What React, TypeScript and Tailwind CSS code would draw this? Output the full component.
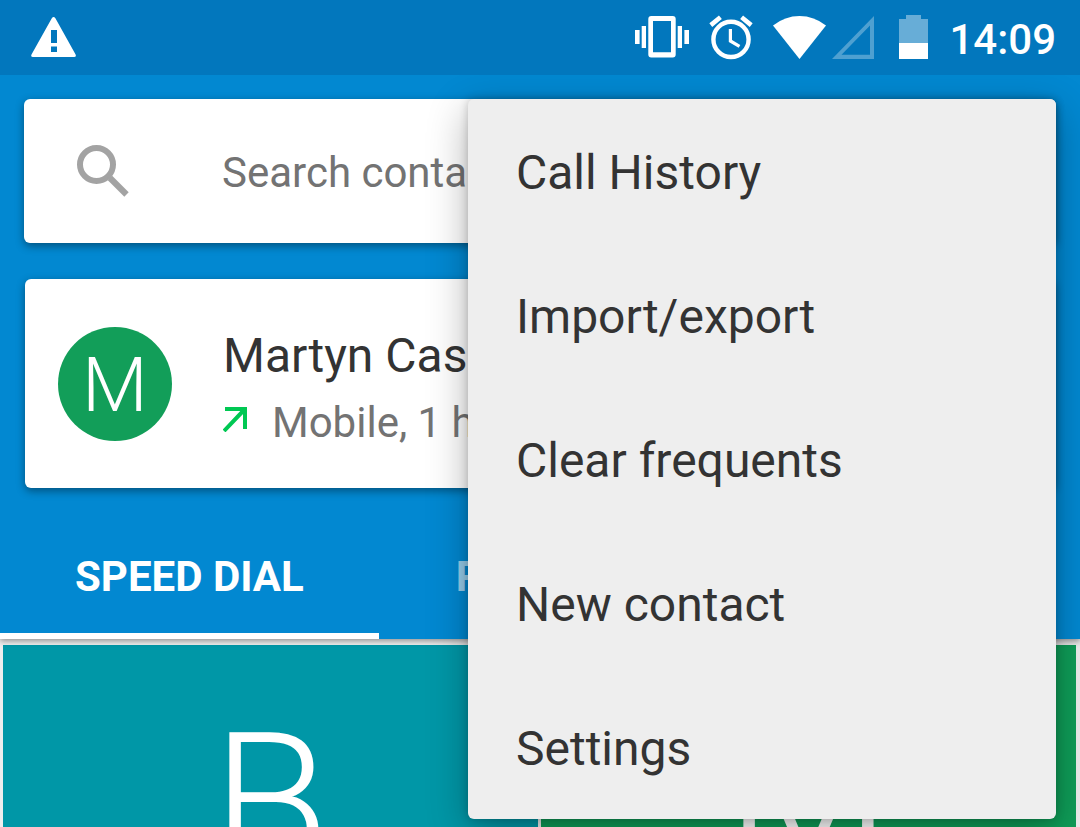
import { useState } from "react";
import clsx from "clsx";

const MENU_ITEMS = ["Call History", "Import/export", "Clear frequents", "New contact", "Settings"];
const TABS = ["SPEED DIAL", "RECENTS", "CONTACTS"];
const TILES = [
  { letter: "B", color: "bg-[#0097a7]" },
  { letter: "M", color: "bg-[#0f9d58]" },
];

function StatusBar() {
  return (
    <header className="relative z-20 flex h-[75px] items-center bg-[#0277bd] pr-6 pl-[31px] text-white">
      <svg width="45" height="45" viewBox="0 0 45 45" aria-label="Warning">
        <path
          fill="currentColor"
          fillRule="evenodd"
          d="M20.8 3.2Q22.6 .8 24.4 3.2L44.6 39.4Q45.6 42 43 42H2Q-.6 42 .5 39.4ZM20 15V28H26V15ZM20 31.500V37H26V31.500Z"
        />
      </svg>

      <div className="ml-auto flex items-center">
        {/* Vibrate */}
        <svg width="54" height="45" viewBox="0 0 54 45" fill="currentColor">
          <path d="M0 15h4.600v14H0zM6.700 11H11v22H6.700zM42.700 11H47v22h-4.300zM49.400 15H54v14h-4.600z" />
          <path
            fillRule="evenodd"
            d="M16.300 1H37.700Q40.700 1 40.700 4V39.400Q40.700 42.400 37.700 42.400H16.300Q13.300 42.400 13.300 39.400V4Q13.300 1 16.300 1ZM18 6V37.300H36V6Z"
          />
        </svg>
        {/* Alarm */}
        <svg className="ml-5" width="44" height="45" viewBox="0 0 44 45" fill="none" stroke="currentColor">
          <circle cx="22" cy="24.400" r="17.600" strokeWidth="4.400" />
          <path d="M21.400 14V26L30.500 31.400" strokeWidth="3.200" />
          <path d="M1.800 10.100 11.400 2.300M42.200 10.100 32.600 2.300" strokeWidth="4.600" />
        </svg>
        {/* Wifi */}
        <svg className="ml-5" width="53" height="45" viewBox="0 0 53 45" fill="currentColor">
          <path d="M26.500 44 0 10.500Q12 1 26.500 1T53 10.500Z" />
        </svg>
        {/* Signal */}
        <svg className="ml-1.5" width="42" height="45" viewBox="0 0 42 45" fill="currentColor">
          <path fillOpacity=".3" fillRule="evenodd" d="M42 1V44H0ZM38 10.500 9.500 39.700H38Z" />
        </svg>
        {/* Battery */}
        <svg className="ml-[25px]" width="29" height="45" viewBox="0 0 29 45" fill="currentColor">
          <path fillOpacity=".4" d="M7 0H22V4H29V28H0V4H7Z" />
          <path d="M0 28H29V44H0Z" />
        </svg>
        <time className="ml-[21px] pt-1 text-[42px] leading-[49px] font-medium">14:09</time>
      </div>
    </header>
  );
}

function OverflowMenu() {
  return (
    <div
      role="menu"
      className="absolute top-0 right-0 z-20 w-[588px] max-w-full rounded-md bg-[#eeeeee] shadow-[0_12px_40px_rgba(0,0,0,0.3),0_0_10px_rgba(0,0,0,0.2)]"
    >
      {MENU_ITEMS.map((item) => (
        <button
          key={item}
          role="menuitem"
          className="block h-36 w-full px-12 pt-1 text-left text-[48px] leading-[56px] text-[#333333]"
        >
          {item}
        </button>
      ))}
    </div>
  );
}

function SearchCard() {
  return (
    <div className="relative mx-6">
      <label className="flex h-36 items-center rounded-md bg-white pl-[53px] shadow-[0_3px_8px_rgba(0,0,0,0.4)]">
        <svg className="shrink-0" width="52" height="52" viewBox="0 0 52 52" fill="none" stroke="#a3a3a3" aria-hidden="true">
          <circle cx="19.500" cy="19.500" r="16.500" strokeWidth="6" />
          <path d="M33 33 49.500 49.500" strokeWidth="6.200" />
          <path d="M31.500 34.500 35.500 33" strokeWidth="4" />
        </svg>
        <input
          type="text"
          aria-label="Search contacts"
          placeholder="Search contacts"
          className="ml-[93px] h-16 min-w-0 flex-1 pt-0.5 text-[42px] text-[#737373] outline-none placeholder:text-[#737373]"
        />
      </label>
      <OverflowMenu />
    </div>
  );
}

function RecentCallCard() {
  return (
    <div className="mx-[25px] mt-9 flex h-[209px] items-center rounded-md bg-white pl-[33px] shadow-[0_3px_8px_rgba(0,0,0,0.4)]">
      <div className="flex size-[114px] shrink-0 items-center justify-center rounded-full bg-[#129e59] pt-0.5 text-[76px] leading-none font-light text-white">
        M
      </div>
      <div className="ml-[51px] pt-2.5">
        <p className="text-[48px] leading-[67px] text-[#333333]">Martyn Casey</p>
        <p className="flex items-center text-[42px] leading-[67px] text-[#737373]">
          <svg className="mr-6 mb-1.5" width="25" height="25" viewBox="0 0 25 25" fill="none" stroke="#00c853" strokeWidth="4">
            <path d="M2 2H22V22M22 2 1 24" />
          </svg>
          Mobile, 1 hr ago
        </p>
      </div>
    </div>
  );
}

export default function App() {
  const [activeTab, setActiveTab] = useState("SPEED DIAL");

  return (
    <div className="h-screen overflow-hidden bg-[#eeeeee] font-['Roboto',sans-serif]">
      <StatusBar />

      <section className="relative z-10 bg-[#0288d1] pt-6 shadow-[0_2px_6px_rgba(0,0,0,0.4)]">
        <SearchCard />
        <RecentCallCard />
        <nav className="mt-[25px] flex gap-0.5 overflow-hidden" role="tablist">
          {TABS.map((tab) => (
            <button
              key={tab}
              role="tab"
              aria-selected={tab === activeTab}
              onClick={() => setActiveTab(tab)}
              className={clsx(
                "h-[126px] shrink-0 border-b-6 px-[75px] pt-1.5 text-[42px] leading-[49px] font-bold",
                tab === activeTab ? "border-white text-white" : "border-transparent text-white/60",
              )}
            >
              {tab}
            </button>
          ))}
        </nav>
      </section>

      <main className="grid grid-cols-2 gap-[3px] pt-1.5 pr-1 pl-[3px]">
        {TILES.map((tile) => (
          <div
            key={tile.letter}
            className={clsx("aspect-square pt-[62px] text-center text-[190px] leading-none font-light text-white", tile.color)}
          >
            {tile.letter}
          </div>
        ))}
      </main>
    </div>
  );
}
